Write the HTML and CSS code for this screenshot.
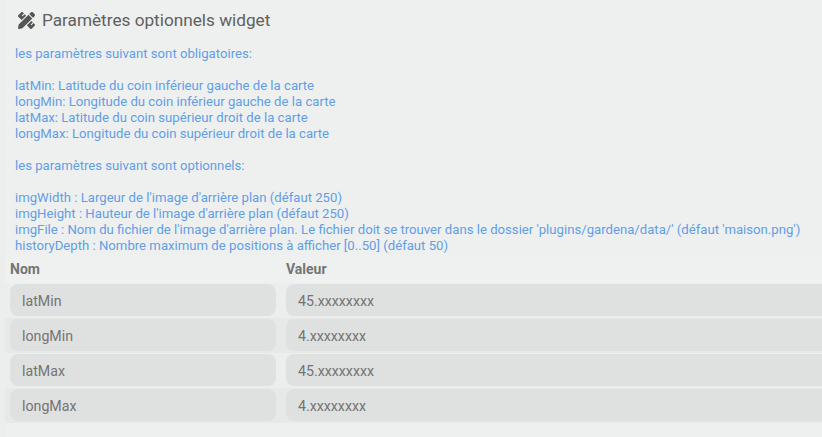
FILE: index.html
```html
<!DOCTYPE html>
<html lang="fr">
<head>
<meta charset="utf-8">
<title>Paramètres optionnels widget</title>
<link rel="stylesheet" href="styles.css">
</head>
<body>
<main class="panel">
<h1 class="title"><svg class="icon" viewBox="0 0 512 512"><path fill="currentColor" d="M109.460 244.040l134.580-134.560-44.120-44.120-61.680 61.680a7.919 7.919 0 0 1-11.210 0l-11.210-11.210c-3.100-3.100-3.100-8.120 0-11.210l61.680-61.680-33.640-33.650C131.470-3.100 111.390-3.100 99 9.290L9.290 99c-12.380 12.390-12.390 32.470 0 44.860l100.170 100.180zm388.470-116.800c18.760-18.760 18.750-49.170 0-67.930l-45.250-45.250c-18.760-18.760-49.180-18.760-67.950 0l-46.020 46.010 113.200 113.200 46.020-46.030zM316.080 82.710l-297 296.960L.320 487.110c-2.530 14.490 10.090 27.110 24.590 24.560l107.450-18.840L429.280 195.900 316.080 82.710zm186.630 285.430l-33.640-33.640-61.680 61.680c-3.100 3.100-8.120 3.100-11.210 0l-11.210-11.210c-3.090-3.100-3.090-8.120 0-11.210l61.680-61.680-44.140-44.140L267.930 402.500l100.210 100.200c12.390 12.390 32.470 12.390 44.860 0l89.710-89.700c12.390-12.390 12.390-32.470 0-44.860z"/></svg><span>Paramètres optionnels widget</span></h1>
<p class="help">les paramètres suivant sont obligatoires:<br><br>latMin: Latitude du coin inférieur gauche de la carte<br>longMin: Longitude du coin inférieur gauche de la carte<br>latMax: Latitude du coin supérieur droit de la carte<br>longMax: Longitude du coin supérieur droit de la carte<br><br>les paramètres suivant sont optionnels:<br><br>imgWidth : Largeur de l'image d'arrière plan (défaut 250)<br>imgHeight : Hauteur de l'image d'arrière plan (défaut 250)<br>imgFile : Nom du fichier de l'image d'arrière plan. Le fichier doit se trouver dans le dossier 'plugins/gardena/data/' (défaut 'maison.png')<br>historyDepth : Nombre maximum de positions à afficher [0..50] (défaut 50)</p>
<div class="row head"><span>Nom</span><span>Valeur</span></div>
<div class="row"><div class="field">latMin</div><div class="field value">45.xxxxxxxx</div></div>
<div class="row alt"><div class="field">longMin</div><div class="field value">4.xxxxxxxx</div></div>
<div class="row"><div class="field">latMax</div><div class="field value">45.xxxxxxxx</div></div>
<div class="row alt"><div class="field">longMax</div><div class="field value">4.xxxxxxxx</div></div>
</main>
</body>
</html>
```
FILE: styles.css
```css
* { box-sizing: border-box; }
body { margin: 0; height: 437px; overflow: hidden; background: #ebeeed; font-family: Roboto, sans-serif; color: #747474; }
.panel { margin-left: 5px; height: 437px; background: #eef0ef; }
.title { display: flex; align-items: center; gap: 7px; height: 40px; margin: 0; padding-left: 13px; font-size: 17.2px; font-weight: 400; color: #606060; }
.icon { width: 17px; height: 17px; color: #555; }
.help { margin: 0; padding: 6px 0 0 10px; height: 215px; font-size: 13.17px; line-height: 16px; color: #629ee6; white-space: nowrap; }
.row { display: grid; grid-template-columns: 266px 1fr; gap: 10px; height: 35px; padding: 1px 0 2px 5px; background: #eceeed; font-size: 14.2px; }
.alt { background: #e7e8e8; }
.head { height: 28px; padding-top: 0; line-height: 28px; background: #eff1f0; font-size: 14px; font-weight: 700; }
.field { height: 32px; padding-left: 12px; border-radius: 8px; background: #dfe1e0; line-height: 34px; }
.value { border-radius: 8px 0 0 8px; }
```
